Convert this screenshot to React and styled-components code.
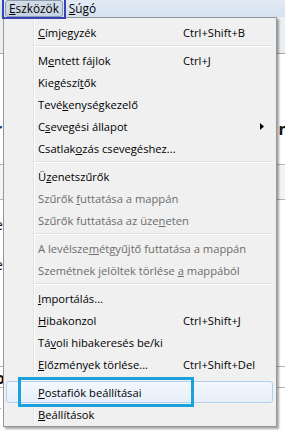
import React from 'react'
import styled, { createGlobalStyle } from 'styled-components'

const GlobalStyle = createGlobalStyle`
  html, body { margin: 0; padding: 0; background: #fff; }
  body { font-family: "Open Sans", "Noto Sans", sans-serif; }
`

const items = [
  { label: '&Címjegyzék', key: 'Ctrl+Shift+B' },
  { sep: true },
  { label: 'M&entett fájlok', key: 'Ctrl+J' },
  { label: 'Kiegészí&tők' },
  { label: 'Tevé&kenységkezelő' },
  { label: 'C&sevegési állapot', sub: true },
  { label: 'Csatlak&ozás csevegéshez...' },
  { sep: true },
  { label: 'Ü&zenetszűrők' },
  { label: 'Szűrők &futtatása a mappán', off: true },
  { label: 'Szűrők futtatása az üze&neten', off: true },
  { sep: true },
  { label: 'A levélsze&métgyűjtő futtatása a mappán', off: true },
  { label: 'Szemétnek jelöltek törlése &a mappából', off: true },
  { sep: true },
  { label: '&Importálás...' },
  { label: '&Hibakonzol', key: 'Ctrl+Shift+J' },
  { label: 'Tá&voli hibakeresés be/ki' },
  { label: '&Előzmények törlése...', key: 'Ctrl+Shift+Del' },
  { sep: true, blank: true },
  { label: '&Postafiók beállításai', hot: true },
  { label: '&Beállítások' },
]

// "&" marks the access key letter
const Accel = ({ text }) => {
  const i = text.indexOf('&')
  if (i < 0) return text
  return (
    <>
      {text.slice(0, i)}
      <u>{text[i + 1]}</u>
      {text.slice(i + 2)}
    </>
  )
}

export default function App() {
  return (
    <>
      <GlobalStyle />
      <Screen>
        <MenuBar>
          <BarItem open><Accel text="&Eszközök" /></BarItem>
          <BarItem><Accel text="&Súgó" /></BarItem>
        </MenuBar>

        <Backdrop>
          <Band />
          <Pane h={111} pt={66}>
            <Peek bold dark>r</Peek>
            <Peek bold right>n</Peek>
          </Pane>
          <Pane h={35} tint="#f4f4f4" />
          <Pane h={167} pt={16} column>
            <Peek>e</Peek>
            <Peek>e</Peek>
          </Pane>
          <Pane h={21} pt={2}>
            <Peek bold>o</Peek>
          </Pane>
          <Pane h={42} pt={17} last>
            <Peek>f</Peek>
          </Pane>
        </Backdrop>

        <Menu>
          {items.map((it, i) =>
            it.sep ? (
              <Separator key={i} blank={it.blank} />
            ) : (
              <Item key={i} hot={it.hot} off={it.off}>
                <Label><Accel text={it.label} /></Label>
                {it.key && <Shortcut>{it.key}</Shortcut>}
                {it.sub && (
                  <Arrow width="4" height="7" viewBox="0 0 4 7">
                    <polygon points="0,0 4,3.5 0,7" fill="#000" />
                  </Arrow>
                )}
              </Item>
            )
          )}
        </Menu>

        <BarCallout />
        <ItemCallout />
      </Screen>
    </>
  )
}

const Screen = styled.div`
  position: relative;
  width: 285px;
  height: 434px;
  overflow: hidden;
  background: #fff;
  font-size: 11.2px;
  color: #000;
`

const MenuBar = styled.div`
  height: 17px;
  display: flex;
  align-items: center;
  gap: 2px;
  padding-left: 5px;
  font-size: 11.8px;
  background: linear-gradient(#e2eaf5, #d6e2f0);
`

const BarItem = styled.div`
  height: 15px;
  line-height: 15px;
  padding: 0 3px;
  border: 1px solid ${p => (p.open ? '#8d9bb0' : 'transparent')};
  border-radius: 3px;
  background: ${p => (p.open ? 'linear-gradient(#d3dde9, #c6d3e3)' : 'transparent')};
  white-space: nowrap;
`

const Backdrop = styled.div`
  display: flex;
  flex-direction: column;
`

const Band = styled.div`
  height: 36px;
  background: #ebeef2;
  border-bottom: 1px solid #a8a8a8;
`

const Pane = styled.div`
  height: ${p => p.h}px;
  padding-top: ${p => p.pt || 0}px;
  box-sizing: border-box;
  display: flex;
  flex-direction: ${p => (p.column ? 'column' : 'row')};
  justify-content: ${p => (p.column ? 'flex-start' : 'space-between')};
  align-items: flex-start;
  gap: ${p => (p.column ? '22px' : '0')};
  background: ${p => p.tint || '#fff'};
  border-bottom: ${p => (p.last ? 'none' : '1px solid #b4b4b4')};
`

const Peek = styled.span`
  font-size: ${p => (p.bold ? 16 : 14)}px;
  font-weight: ${p => (p.bold ? 700 : 400)};
  line-height: 18px;
  color: ${p => (p.dark ? '#1b3a66' : '#111')};
  margin-left: ${p => (p.right ? '0' : '-5px')};
  margin-right: ${p => (p.right ? '-4px' : '0')};
`

const Menu = styled.div`
  position: absolute;
  left: 3px;
  top: 17px;
  width: 274px;
  box-sizing: border-box;
  padding: 3px 3px 1px 2px;
  border: 1px solid #979797;
  box-shadow: 2px 2px 2px rgba(0, 0, 0, 0.35);
  background: linear-gradient(
    to right,
    #f0f0f0 29px,
    #e2e3e3 29px,
    #e2e3e3 30px,
    #fff 30px,
    #fff 31px,
    #f0f0f0 31px
  );
`

const Item = styled.div`
  height: 22px;
  box-sizing: border-box;
  display: flex;
  align-items: center;
  padding-left: 31px;
  border: 1px solid ${p => (p.hot ? '#b3cfef' : 'transparent')};
  border-radius: 3px;
  background: ${p => (p.hot ? 'linear-gradient(#f3f7fd, #e7effa)' : 'transparent')};
  color: ${p => (p.off ? '#6d6d6d' : '#000')};
  white-space: nowrap;
`

const Label = styled.span`
  width: 145px;
  flex-shrink: 0;
`

const Shortcut = styled.span``

const Arrow = styled.svg`
  margin-left: auto;
  margin-right: 8px;
`

const Separator = styled.div`
  height: 6px;
  display: flex;
  align-items: center;
  padding-left: 28px;
  &::after {
    content: '';
    flex: 1;
    height: 1px;
    background: ${p => (p.blank ? 'transparent' : '#e0e0e0')};
    border-bottom: 1px solid ${p => (p.blank ? 'transparent' : '#fff')};
  }
`

const BarCallout = styled.div`
  position: absolute;
  left: 2px;
  top: -2px;
  width: 64px;
  height: 21px;
  box-sizing: border-box;
  border: 2px solid #3942b6;
`

const ItemCallout = styled.div`
  position: absolute;
  left: 18px;
  top: 377px;
  width: 176px;
  height: 30px;
  box-sizing: border-box;
  border: 3px solid #1ba1db;
`
